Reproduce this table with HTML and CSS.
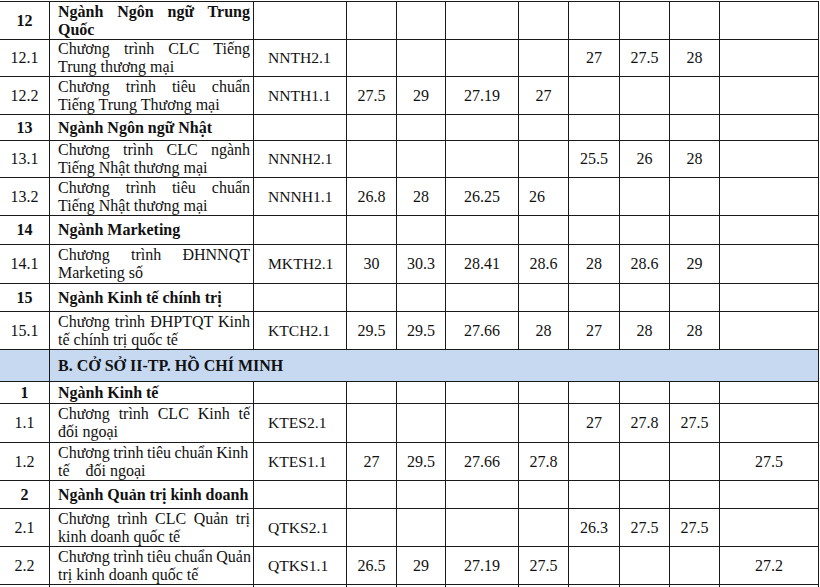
FILE: index.html
```html
<!DOCTYPE html>
<html lang="vi">
<head>
<meta charset="utf-8">
<link rel="stylesheet" href="styles.css">
</head>
<body>
<div class="page">
<table class="grid">
<colgroup>
<col class="w-stt"><col class="w-name"><col class="w-code"><col class="w-a"><col class="w-b"><col class="w-c"><col class="w-d"><col class="w-e"><col class="w-f"><col class="w-g"><col class="w-h">
</colgroup>
<tbody>
<tr class="h38"><td class="stt b">12</td><td class="name b"><span class="ln j">Ngành Ngôn ngữ Trung</span><span class="ln">Quốc</span></td><td></td><td></td><td></td><td></td><td></td><td></td><td></td><td></td><td></td></tr>
<tr class="h37"><td class="stt">12.1</td><td class="name"><span class="ln j">Chương trình CLC Tiếng</span><span class="ln">Trung thương mại</span></td><td class="code">NNTH2.1</td><td></td><td></td><td></td><td></td><td class="n">27</td><td class="n">27.5</td><td class="n">28</td><td></td></tr>
<tr class="h38"><td class="stt">12.2</td><td class="name"><span class="ln j">Chương trình tiêu chuẩn</span><span class="ln">Tiếng Trung Thương mại</span></td><td class="code">NNTH1.1</td><td class="n">27.5</td><td class="n">29</td><td class="n">27.19</td><td class="n">27</td><td></td><td></td><td></td><td></td></tr>
<tr class="h26"><td class="stt b">13</td><td class="name b">Ngành Ngôn ngữ Nhật</td><td></td><td></td><td></td><td></td><td></td><td></td><td></td><td></td><td></td></tr>
<tr class="h37"><td class="stt">13.1</td><td class="name"><span class="ln j">Chương trình CLC ngành</span><span class="ln">Tiếng Nhật thương mại</span></td><td class="code">NNNH2.1</td><td></td><td></td><td></td><td></td><td class="n">25.5</td><td class="n">26</td><td class="n">28</td><td></td></tr>
<tr class="h38"><td class="stt">13.2</td><td class="name"><span class="ln j">Chương trình tiêu chuẩn</span><span class="ln">Tiếng Nhật thương mại</span></td><td class="code">NNNH1.1</td><td class="n">26.8</td><td class="n">28</td><td class="n">26.25</td><td class="nl">26</td><td></td><td></td><td></td><td></td></tr>
<tr class="h29"><td class="stt b">14</td><td class="name b">Ngành Marketing</td><td></td><td></td><td></td><td></td><td></td><td></td><td></td><td></td><td></td></tr>
<tr class="h39"><td class="stt">14.1</td><td class="name"><span class="ln j">Chương trình ĐHNNQT</span><span class="ln">Marketing số</span></td><td class="code">MKTH2.1</td><td class="n">30</td><td class="n">30.3</td><td class="n">28.41</td><td class="n">28.6</td><td class="n">28</td><td class="n">28.6</td><td class="n">29</td><td></td></tr>
<tr class="h28"><td class="stt b">15</td><td class="name b">Ngành Kinh tế chính trị</td><td></td><td></td><td></td><td></td><td></td><td></td><td></td><td></td><td></td></tr>
<tr class="h38"><td class="stt">15.1</td><td class="name"><span class="ln j">Chương trình ĐHPTQT Kinh</span><span class="ln">tế chính trị quốc tế</span></td><td class="code">KTCH2.1</td><td class="n">29.5</td><td class="n">29.5</td><td class="n">27.66</td><td class="n">28</td><td class="n">27</td><td class="n">28</td><td class="n">28</td><td></td></tr>
<tr class="h32 section"><td class="stt"></td><td class="name b" colspan="10">B. CỞ SỞ II-TP. HỒ CHÍ MINH</td></tr>
<tr class="h22"><td class="stt b">1</td><td class="name b">Ngành Kinh tế</td><td></td><td></td><td></td><td></td><td></td><td></td><td></td><td></td><td></td></tr>
<tr class="h39"><td class="stt">1.1</td><td class="name"><span class="ln j">Chương trình CLC Kinh tế</span><span class="ln">đối ngoại</span></td><td class="code">KTES2.1</td><td></td><td></td><td></td><td></td><td class="n">27</td><td class="n">27.8</td><td class="n">27.5</td><td></td></tr>
<tr class="h38"><td class="stt">1.2</td><td class="name"><span class="ln tight">Chương trình tiêu chuẩn Kinh</span><span class="ln">tế&nbsp;&nbsp; &nbsp;đối ngoại</span></td><td class="code">KTES1.1</td><td class="n">27</td><td class="n">29.5</td><td class="n">27.66</td><td class="n">27.8</td><td></td><td></td><td></td><td class="n">27.5</td></tr>
<tr class="h28"><td class="stt b">2</td><td class="name b">Ngành Quản trị kinh doanh</td><td></td><td></td><td></td><td></td><td></td><td></td><td></td><td></td><td></td></tr>
<tr class="h38"><td class="stt">2.1</td><td class="name"><span class="ln j">Chương trình CLC Quản trị</span><span class="ln">kinh doanh quốc tế</span></td><td class="code">QTKS2.1</td><td></td><td></td><td></td><td></td><td class="n">26.3</td><td class="n">27.5</td><td class="n">27.5</td><td></td></tr>
<tr class="h38"><td class="stt">2.2</td><td class="name"><span class="ln tight">Chương trình tiêu chuẩn Quản</span><span class="ln">trị kinh doanh quốc tế</span></td><td class="code">QTKS1.1</td><td class="n">26.5</td><td class="n">29</td><td class="n">27.19</td><td class="n">27.5</td><td></td><td></td><td></td><td class="n">27.2</td></tr>
<tr class="h38"><td class="stt"></td><td class="name"></td><td></td><td></td><td></td><td></td><td></td><td></td><td></td><td></td><td></td></tr>
</tbody>
</table>
</div>
</body>
</html>
```

FILE: styles.css
```css
html, body {
  margin: 0;
  padding: 0;
  background: #ffffff;
  overflow: hidden;
}
.page {
  width: 820px;
  height: 587px;
  overflow: hidden;
  padding-top: 1px;
  box-sizing: border-box;
}
.grid {
  border-collapse: collapse;
  table-layout: fixed;
  width: 819px;
  margin-left: -1px;
  font-family: "Liberation Serif", "Times New Roman", serif;
  font-size: 16px;
  line-height: 18px;
  color: #111111;
}
.grid td {
  border: 1px solid #1a1a1a;
  padding: 0 3px 0 8px;
  vertical-align: middle;
  overflow: hidden;
}
.w-stt { width: 50px; }
.w-name { width: 204px; }
.w-code { width: 93px; }
.w-a { width: 50px; }
.w-b { width: 49px; }
.w-c { width: 73px; }
.w-d { width: 50px; }
.w-e { width: 51px; }
.w-f { width: 50px; }
.w-g { width: 50px; }
.w-h { width: 99px; }

.h22 { height: 22px; }
.h26 { height: 26px; }
.h28 { height: 28px; }
.h29 { height: 29px; }
.h32 { height: 32px; }
.h37 { height: 37px; }
.h38 { height: 38px; }
.h39 { height: 39px; }

.grid td.stt {
  text-align: center;
  padding: 0;
}
.grid td.name {
  text-align: left;
}
.ln {
  display: block;
  white-space: nowrap;
}
.ln.j {
  text-align: justify;
  text-align-last: justify;
}
.ln.tight {
  word-spacing: -0.5px;
}
.grid td.code {
  padding-left: 14px;
  text-align: left;
  font-size: 15.6px;
}
.grid td.n {
  text-align: center;
  padding: 0;
}
.grid td.nl {
  text-align: left;
  padding-left: 10px;
}
.grid td.b {
  font-weight: bold;
}
.section td {
  background: #c6d9f1;
}
```
